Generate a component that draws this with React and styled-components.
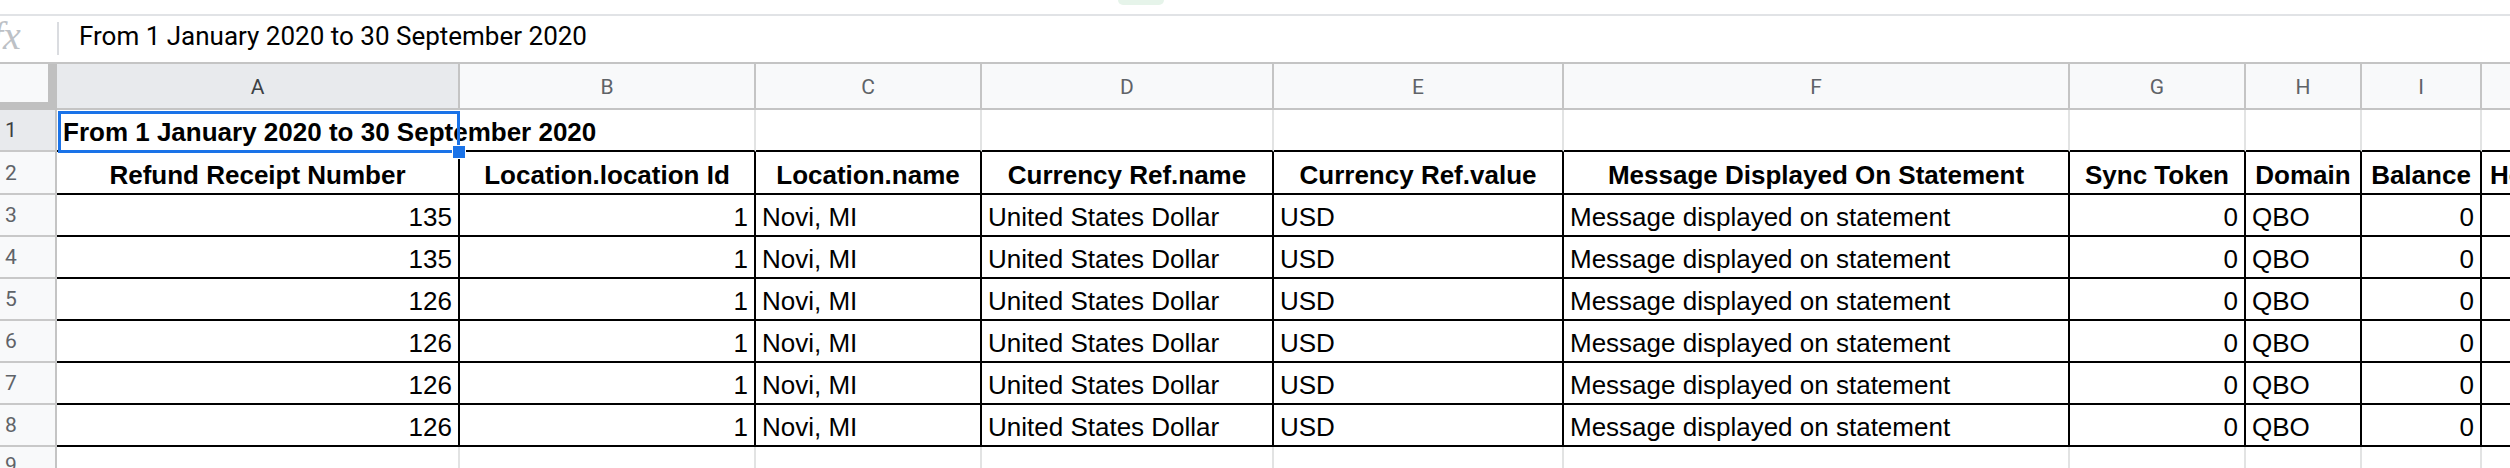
import styled, { createGlobalStyle } from 'styled-components';

const GlobalStyle = createGlobalStyle`
  html, body {
    margin: 0;
    padding: 0;
    background: #ffffff;
  }
  body {
    overflow: hidden;
  }
`;

const Page = styled.div`
  position: relative;
  width: 2510px;
  height: 468px;
  overflow: hidden;
  background: #ffffff;
  font-family: "Liberation Sans", Arial, sans-serif;
`;

const TopStrip = styled.div`
  height: 14px;
  display: flex;
`;

const TabHint = styled.div`
  margin-left: 1118px;
  width: 46px;
  height: 5px;
  background: #e6f4ea;
  border-radius: 0 0 8px 8px;
`;

const FormulaBar = styled.div`
  height: 46px;
  border-top: 2px solid #e1e3e6;
  display: flex;
  align-items: flex-start;
`;

const FxLabel = styled.div`
  width: 57px;
  height: 100%;
  overflow: hidden;
  font-family: "Liberation Serif", serif;
  font-style: italic;
  font-size: 40px;
  line-height: 40px;
  color: #bdc1c6;
  box-sizing: border-box;

  span {
    margin-left: -8px;
  }
`;

const FxDivider = styled.div`
  width: 2px;
  height: 33px;
  margin-top: 6px;
  background: #dadce0;
`;

const FormulaText = styled.div`
  margin-left: 20px;
  padding-top: 5px;
  font-family: Roboto, "Liberation Sans", sans-serif;
  font-size: 26px;
  line-height: 30px;
  color: #000000;
  white-space: nowrap;
`;

const Grid = styled.div`
  border-top: 2px solid #c4c4c4;
`;

const Row = styled.div`
  display: flex;
  height: ${(p) => p.$h}px;
`;

const Corner = styled.div`
  flex: none;
  width: 57px;
  height: 100%;
  background: #c0c0c0;
  display: flex;
  align-items: flex-start;
`;

const CornerFill = styled.div`
  width: 48px;
  height: 38px;
  background: #f8f9fa;
`;

const ColHead = styled.div`
  flex: none;
  box-sizing: border-box;
  width: ${(p) => p.$w}px;
  height: 100%;
  background: ${(p) => (p.$active ? '#e8eaed' : '#f8f9fa')};
  border-right: 2px solid #c4c4c4;
  border-bottom: 2px solid #c4c4c4;
  display: flex;
  align-items: center;
  justify-content: center;
  font-family: Roboto, "Liberation Sans", sans-serif;
  font-size: 21px;
  color: ${(p) => (p.$active ? '#3c4043' : '#5f6368')};
  padding-top: 2px;
`;

const RowHead = styled.div`
  flex: none;
  box-sizing: border-box;
  width: 57px;
  height: 100%;
  background: ${(p) => (p.$active ? '#e8eaed' : '#f8f9fa')};
  border-right: 2px solid #c4c4c4;
  border-bottom: 2px solid #c8c8c8;
  display: flex;
  align-items: ${(p) => (p.$top ? 'flex-start' : 'center')};
  padding-left: 5px;
  padding-top: ${(p) => (p.$top ? '6px' : '0')};
  font-family: Roboto, "Liberation Sans", sans-serif;
  font-size: 21px;
  color: ${(p) => (p.$active ? '#3c4043' : '#5f6368')};
`;

const Cell = styled.div`
  flex: none;
  box-sizing: border-box;
  width: ${(p) => p.$w}px;
  height: 100%;
  border-right: 2px solid ${(p) => p.$side};
  border-bottom: 2px solid ${(p) => p.$under};
  display: flex;
  align-items: flex-end;
  justify-content: ${(p) => p.$align};
  padding: 0 6px 3px;
  font-size: 26px;
  line-height: 30px;
  font-weight: ${(p) => (p.$bold ? 700 : 400)};
  color: #000000;
  white-space: nowrap;
`;

const Selection = styled.div`
  position: absolute;
  left: 58px;
  top: 111px;
  width: 402px;
  height: 42px;
  box-sizing: border-box;
  border: 3px solid #1a73e8;
  pointer-events: none;
`;

const Handle = styled.div`
  position: absolute;
  right: -9px;
  bottom: -9px;
  width: 12px;
  height: 12px;
  background: #1a73e8;
  border: 1px solid #ffffff;
`;

const BLACK = '#000000';
const LIGHT = '#e2e3e3';

// last column is cut by the window edge, so its letter and values stay out of view
const columns = [
  { key: 'A', w: 403, title: 'Refund Receipt Number', align: 'flex-end' },
  { key: 'B', w: 296, title: 'Location.location Id', align: 'flex-end' },
  { key: 'C', w: 226, title: 'Location.name', align: 'flex-start' },
  { key: 'D', w: 292, title: 'Currency Ref.name', align: 'flex-start' },
  { key: 'E', w: 290, title: 'Currency Ref.value', align: 'flex-start' },
  { key: 'F', w: 506, title: 'Message Displayed On Statement', align: 'flex-start' },
  { key: 'G', w: 176, title: 'Sync Token', align: 'flex-end' },
  { key: 'H', w: 116, title: 'Domain', align: 'flex-start' },
  { key: 'I', w: 120, title: 'Balance', align: 'flex-end' },
  { key: 'J', w: 197, title: 'Home Balance', align: 'flex-end', hidden: true },
];

const receipts = ['135', '135', '126', '126', '126', '126'];

const dataRow = (num) => [
  num,
  '1',
  'Novi, MI',
  'United States Dollar',
  'USD',
  'Message displayed on statement',
  '0',
  'QBO',
  '0',
  '',
];

const App = () => {
  return (
    <Page>
      <GlobalStyle />
      <TopStrip>
        <TabHint />
      </TopStrip>
      <FormulaBar>
        <FxLabel>
          <span>fx</span>
        </FxLabel>
        <FxDivider />
        <FormulaText>From 1 January 2020 to 30 September 2020</FormulaText>
      </FormulaBar>

      <Grid>
        <Row $h={46}>
          <Corner>
            <CornerFill />
          </Corner>
          {columns.map((c) => (
            <ColHead key={c.key} $w={c.w} $active={c.key === 'A'}>
              {c.hidden ? '' : c.key}
            </ColHead>
          ))}
        </Row>

        <Row $h={42}>
          <RowHead $active>1</RowHead>
          {columns.map((c, i) => (
            <Cell
              key={c.key}
              $w={c.w}
              $side={i === 0 ? 'transparent' : LIGHT}
              $under={BLACK}
              $align="flex-start"
              $bold
            >
              {i === 0 ? 'From 1 January 2020 to 30 September 2020' : ''}
            </Cell>
          ))}
        </Row>

        <Row $h={43}>
          <RowHead>2</RowHead>
          {columns.map((c) => (
            <Cell key={c.key} $w={c.w} $side={BLACK} $under={BLACK} $align="center" $bold>
              {c.title}
            </Cell>
          ))}
        </Row>

        {receipts.map((num, r) => (
          <Row $h={42} key={r}>
            <RowHead>{r + 3}</RowHead>
            {dataRow(num).map((v, i) => (
              <Cell
                key={columns[i].key}
                $w={columns[i].w}
                $side={BLACK}
                $under={BLACK}
                $align={columns[i].align}
              >
                {v}
              </Cell>
            ))}
          </Row>
        ))}

        <Row $h={42}>
          <RowHead $top>9</RowHead>
          {columns.map((c) => (
            <Cell key={c.key} $w={c.w} $side={LIGHT} $under={LIGHT} $align="flex-start" />
          ))}
        </Row>
      </Grid>

      <Selection>
        <Handle />
      </Selection>
    </Page>
  );
};

export default App;
